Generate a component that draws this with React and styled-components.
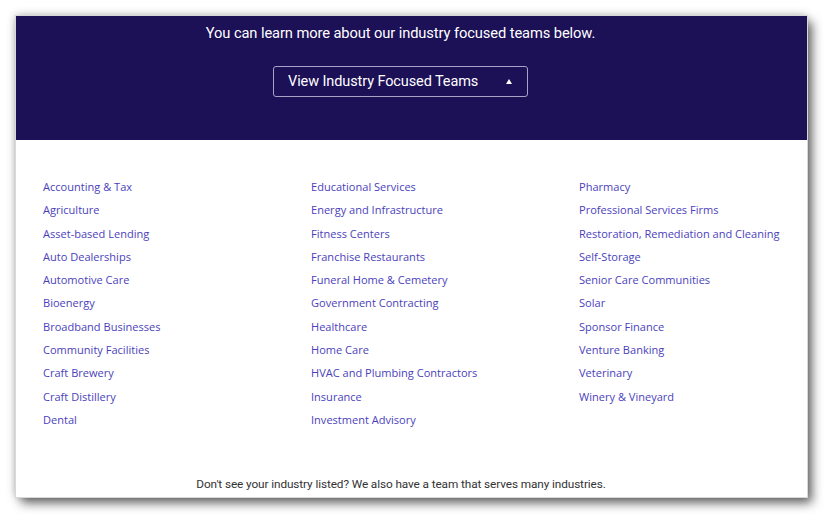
import React from "react";
import styled, { createGlobalStyle } from "styled-components";

const Global = createGlobalStyle`
  html, body { margin: 0; padding: 0; background: #ffffff; }
  body { font-family: "Roboto", "Liberation Sans", sans-serif; }
`;

const Page = styled.div`
  width: 825px;
  height: 515px;
  padding: 16px 18px 0 16px;
  box-sizing: border-box;
  overflow: hidden;
`;

const Card = styled.div`
  width: 791px;
  height: 481px;
  background: #fff;
  display: flex;
  flex-direction: column;
  box-shadow: 5px 6px 10px rgba(0,0,0,0.6), -1px -1px 8px rgba(0,0,0,0.25);
  outline: 1px solid #d8d8d8;
`;

const Hero = styled.div`
  background: #1c1057;
  height: 124px;
  box-sizing: border-box;
  display: flex;
  flex-direction: column;
  align-items: center;
  padding: 9px 22px 0 0;
`;

const Lead = styled.p`
  margin: 0;
  color: #ffffff;
  font-family: "Roboto", sans-serif;
  font-size: 14.7px;
  line-height: 17px;
  letter-spacing: -0.1px;
`;

const Toggle = styled.button`
  margin-top: 24px;
  width: 255px;
  height: 31px;
  box-sizing: border-box;
  background: transparent;
  border: 1px solid #a7a3c4;
  border-radius: 3px;
  color: #ffffff;
  display: flex;
  align-items: center;
  justify-content: space-between;
  padding: 0 14px 0 14px;
  font-family: "Roboto", sans-serif;
  font-size: 14.5px;
  letter-spacing: -0.1px;
  cursor: pointer;
`;

const Caret = styled.span`
  width: 0;
  height: 0;
  border-left: 3px solid transparent;
  border-right: 3px solid transparent;
  border-bottom: 5px solid #ffffff;
  margin-right: 1px;
`;

const Body = styled.div`
  flex: 1;
  display: flex;
  flex-direction: column;
  padding: 34px 0 0 27px;
`;

const Columns = styled.div`
  display: grid;
  grid-template-columns: 268px 268px 1fr;
`;

const List = styled.ul`
  list-style: none;
  margin: 0;
  padding: 0;
`;

const Item = styled.li`
  height: 23.3px;
  line-height: 23.3px;
  white-space: nowrap;
`;

const Link = styled.a`
  color: #4b3fbd;
  font-family: "Open Sans", "Noto Sans", sans-serif;
  font-size: 11.05px;
  letter-spacing: 0px;
  text-decoration: none;
`;

const Footer = styled.p`
  margin: auto 48px 6px 0;
  text-align: center;
  color: #333333;
  font-family: "Roboto", sans-serif;
  font-size: 11.8px;
  letter-spacing: -0.1px;
`;

const cols = [
  [
    "Accounting & Tax",
    "Agriculture",
    "Asset-based Lending",
    "Auto Dealerships",
    "Automotive Care",
    "Bioenergy",
    "Broadband Businesses",
    "Community Facilities",
    "Craft Brewery",
    "Craft Distillery",
    "Dental",
  ],
  [
    "Educational Services",
    "Energy and Infrastructure",
    "Fitness Centers",
    "Franchise Restaurants",
    "Funeral Home & Cemetery",
    "Government Contracting",
    "Healthcare",
    "Home Care",
    "HVAC and Plumbing Contractors",
    "Insurance",
    "Investment Advisory",
  ],
  [
    "Pharmacy",
    "Professional Services Firms",
    "Restoration, Remediation and Cleaning",
    "Self-Storage",
    "Senior Care Communities",
    "Solar",
    "Sponsor Finance",
    "Venture Banking",
    "Veterinary",
    "Winery & Vineyard",
  ],
];

export default function App() {
  return (
    <>
      <Global />
      <Page>
        <Card>
          <Hero>
            <Lead>You can learn more about our industry focused teams below.</Lead>
            <Toggle>
              View Industry Focused Teams
              <Caret />
            </Toggle>
          </Hero>
          <Body>
            <Columns>
              {cols.map((c, i) => (
                <List key={i}>
                  {c.map((t) => (
                    <Item key={t}>
                      <Link href="#">{t}</Link>
                    </Item>
                  ))}
                </List>
              ))}
            </Columns>
            <Footer>
              Don't see your industry listed? We also have a team that serves many industries.
            </Footer>
          </Body>
        </Card>
      </Page>
    </>
  );
}
